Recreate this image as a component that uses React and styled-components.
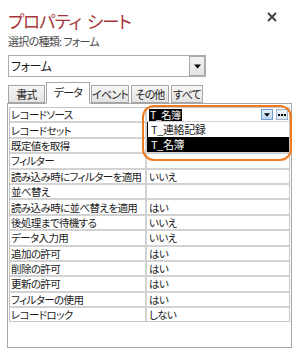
import React from "react";
import styled, { createGlobalStyle } from "styled-components";

const Global = createGlobalStyle`
  html, body { margin: 0; padding: 0; background: #ffffff; overflow: hidden; }
  body { font-family: "Noto Sans CJK JP", "Noto Sans", sans-serif; font-feature-settings: "palt"; }
`;

const Page = styled.div`
  width: 299px;
  height: 348px;
  padding: 9px 8px 0 7px;
  box-sizing: border-box;
  display: flex;
  flex-direction: column;
`;

const Header = styled.div`
  display: flex;
  align-items: center;
  justify-content: space-between;
  height: 24px;
  padding-left: 1px;
`;

const Title = styled.div`
  display: flex;
  gap: 6px;
  font-size: 17.5px;
  line-height: 24px;
  color: #a4373a;
  letter-spacing: -1px;
  white-space: nowrap;
`;

const Close = styled.svg`
  width: 10px;
  height: 10px;
  margin-right: 14px;
  margin-top: -8px;
`;

const Sub = styled.div`
  font-size: 11px;
  line-height: 16px;
  color: #4a4a4a;
  padding-left: 1px;
  letter-spacing: -0.7px;
  white-space: pre;
`;

const Combo = styled.div`
  margin-top: 6px;
  width: 198px;
  height: 22px;
  box-sizing: border-box;
  border: 1px solid #abadb3;
  background: #fff;
  display: flex;
  align-items: stretch;
  justify-content: space-between;
  margin-left: 1px;
`;

const ComboText = styled.div`
  font-size: 12px;
  line-height: 20px;
  color: #1a1a1a;
  padding-left: 2px;
  letter-spacing: -0.4px;
`;

const ComboBtn = styled.div`
  width: 16px;
  box-sizing: border-box;
  border: 1px solid #a9a9a9;
  background: linear-gradient(#f4f4f4, #e2e2e2);
  display: flex;
  align-items: center;
  justify-content: center;
`;

const Tabs = styled.div`
  margin-top: 5px;
  height: 21px;
  display: flex;
  align-items: flex-end;
  gap: 1px;
  padding-left: 1px;
  position: relative;
  z-index: 2;
`;

const Tab = styled.div`
  width: ${(p) => p.$w}px;
  height: ${(p) => (p.$active ? 22 : 18)}px;
  box-sizing: border-box;
  border: 1px solid #a6a6a6;
  border-bottom: ${(p) => (p.$active ? "1px solid #ffffff" : "1px solid #a6a6a6")};
  background: ${(p) => (p.$active ? "#ffffff" : "linear-gradient(#f6f6f6, #e3e3e3)")};
  font-size: 11px;
  letter-spacing: -0.8px;
  white-space: nowrap;
  overflow: hidden;
  line-height: ${(p) => (p.$active ? 18 : 16)}px;
  color: #1e1e1e;
  text-align: center;
  margin-right: ${(p) => p.$mr || 0}px;
  margin-bottom: ${(p) => (p.$active ? -1 : 0)}px;
`;

const Panel = styled.div`
  position: relative;
  width: 285px;
  height: 260px;
  box-sizing: border-box;
  border: 1px solid #a6a6a6;
  padding: 3px 1px 0 1px;
  background: #ffffff;
`;

const Grid = styled.div`
  display: grid;
  grid-template-columns: 135px 142px;
  grid-auto-rows: 13.4px;
  gap: 2px;
  background: #d2d2d2;
  border: 1px solid #c6c6c6;
`;

const Cell = styled.div`
  background: #ffffff;
  font-size: 10.5px;
  letter-spacing: -0.6px;
  line-height: 13px;
  color: #1a1a1a;
  padding-left: ${(p) => (p.$value ? 2 : 1)}px;
  white-space: nowrap;
  display: flex;
  align-items: center;
`;

const Selected = styled.span`
  background: #000;
  color: #fff;
  padding: 0 1px;
  line-height: 12px;
`;

const Spacer = styled.div`
  flex: 1;
`;

const MiniBtn = styled.div`
  width: 12px;
  height: 11px;
  box-sizing: border-box;
  border: 1px solid ${(p) => (p.$blue ? "#6f9fd0" : "#9bb3cc")};
  background: ${(p) => (p.$blue ? "linear-gradient(#e3effa, #bcd6ee)" : "linear-gradient(#f2f6fa, #dce6f0)")};
  margin-right: ${(p) => p.$mr}px;
  display: flex;
  align-items: center;
  justify-content: center;
`;

const DropList = styled.div`
  position: absolute;
  left: 139px;
  top: 18px;
  width: 142px;
  box-sizing: border-box;
  border-left: 1px solid #000;
  background: #fff;
  z-index: 3;
`;

const Item = styled.div`
  height: 15px;
  font-size: 11px;
  letter-spacing: -0.4px;
  line-height: 15px;
  padding-left: 3px;
  background: ${(p) => (p.$sel ? "#000" : "#fff")};
  color: ${(p) => (p.$sel ? "#fff" : "#1a1a1a")};
`;

const Highlight = styled.div`
  position: absolute;
  left: 134px;
  top: 1px;
  width: 150px;
  height: 56px;
  box-sizing: border-box;
  border: 2px solid #f07a1e;
  border-radius: 12px;
  z-index: 4;
  pointer-events: none;
`;

const Arrow = ({ size = 7 }) => (
  <svg width={size} height={Math.ceil(size / 2) + 1} viewBox="0 0 7 4">
    <polygon points="0,0 7,0 3.5,4" fill="#000" />
  </svg>
);

const rows = [
  ["レコードソース", null],
  ["レコードセット", ""],
  ["既定値を取得", ""],
  ["フィルター", ""],
  ["読み込み時にフィルターを適用", "いいえ"],
  ["並べ替え", ""],
  ["読み込み時に並べ替えを適用", "はい"],
  ["後処理まで待機する", "いいえ"],
  ["データ入力用", "いいえ"],
  ["追加の許可", "はい"],
  ["削除の許可", "はい"],
  ["更新の許可", "はい"],
  ["フィルターの使用", "はい"],
  ["レコードロック", "しない"],
];

const tabs = [
  { t: "書式", w: 37 },
  { t: "データ", w: 44, active: true },
  { t: "イベント", w: 38, mr: 1 },
  { t: "その他", w: 38, mr: 1 },
  { t: "すべて", w: 32 },
];

export default function App() {
  return (
    <>
      <Global />
      <Page>
        <Header>
          <Title>
            <span>プロパティ</span>
            <span>シート</span>
          </Title>
          <Close viewBox="0 0 10 10">
            <path d="M1 1 L9 9 M9 1 L1 9" stroke="#3c3c3c" strokeWidth="1.8" />
          </Close>
        </Header>
        <Sub>選択の種類: フォーム</Sub>
        <Combo>
          <ComboText>フォーム</ComboText>
          <ComboBtn>
            <Arrow />
          </ComboBtn>
        </Combo>
        <Tabs>
          {tabs.map((x) => (
            <Tab key={x.t} $w={x.w} $active={x.active} $mr={x.mr}>
              {x.t}
            </Tab>
          ))}
        </Tabs>
        <Panel>
          <Grid>
            {rows.map(([label, value]) => (
              <React.Fragment key={label}>
                <Cell>{label}</Cell>
                {value === null ? (
                  <Cell $value>
                    <Selected>T_名簿</Selected>
                    <Spacer />
                    <MiniBtn $blue $mr={3}>
                      <Arrow size={6} />
                    </MiniBtn>
                    <MiniBtn $mr={1}>
                      <svg width="8" height="2" viewBox="0 0 8 2">
                        <rect x="0" y="0" width="2" height="2" fill="#000" />
                        <rect x="3" y="0" width="2" height="2" fill="#000" />
                        <rect x="6" y="0" width="2" height="2" fill="#000" />
                      </svg>
                    </MiniBtn>
                  </Cell>
                ) : (
                  <Cell $value>{value}</Cell>
                )}
              </React.Fragment>
            ))}
          </Grid>
          <DropList>
            <Item>T_連絡記録</Item>
            <Item $sel>T_名簿</Item>
          </DropList>
          <Highlight />
        </Panel>
      </Page>
    </>
  );
}
